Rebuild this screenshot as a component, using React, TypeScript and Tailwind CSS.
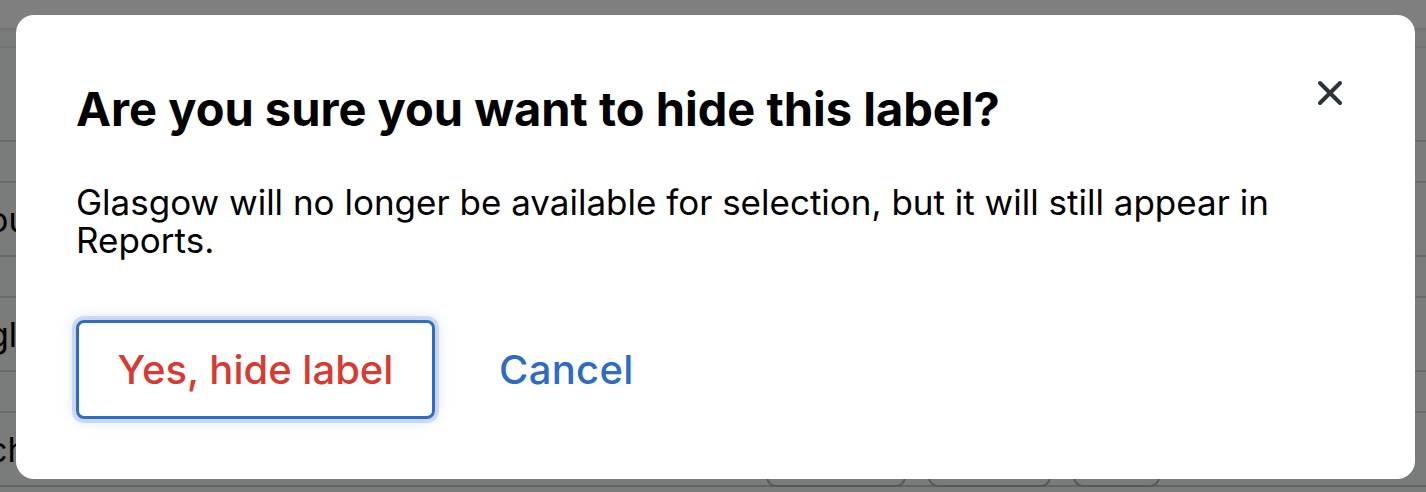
import React from "react";

const FONT = { fontFamily: "Inter, 'Noto Sans', sans-serif" };

const rows = [
  { text: "ou" },
  { text: "gl" },
  { text: "ch" },
];

const App: React.FC = () => {
  return (
    <div className="relative w-[1426px] h-[492px] overflow-hidden bg-[#f4f6f6]" style={FONT}>
      {/* underlying page */}
      <div className="h-[30px] bg-white border-b-2 border-[#dcdfe0]" />
      <div className="h-[18px] border-b-2 border-[#e3e6e7]" />
      <div className="mt-[92px]">
        {rows.map((r) => (
          <div key={r.text}>
            <div className="h-[41px] border-t-2 border-[#d6d9da]" />
            <div className="h-[74px] border-t-2 border-[#d6d9da] flex items-center">
              <span className="ml-[-12px] text-[34px] text-black">{r.text}</span>
            </div>
          </div>
        ))}
        <div className="border-t-2 border-[#c4c8c9] h-[8px] flex justify-end pr-[266px] gap-[22px]">
          <div className="-mt-[40px] w-[140px] h-[40px] rounded-b-[10px] border-2 border-[#aab0b0]" />
          <div className="-mt-[40px] w-[123px] h-[40px] rounded-b-[10px] border-2 border-[#aab0b0]" />
          <div className="-mt-[40px] w-[87px] h-[40px] rounded-b-[10px] border-2 border-[#aab0b0]" />
        </div>
      </div>

      {/* overlay */}
      <div className="absolute inset-0 bg-black/50" />

      {/* modal */}
      <div className="absolute left-[16px] top-[15px] w-[1399px] h-[464px] bg-white rounded-[18px] pl-[60px] pr-[110px] pt-[66px]">
        <button className="absolute right-[57px] top-[50px] w-[56px] h-[56px] flex items-center justify-center text-[#2b3438]">
          <svg width="26" height="26" viewBox="0 0 26 26" fill="none" stroke="currentColor" strokeWidth="4" strokeLinecap="round">
            <path d="M3 3 L23 23 M23 3 L3 23" />
          </svg>
        </button>
        <h2 className="text-[47px] leading-[56px] font-bold text-black">
          Are you sure you want to hide this label?
        </h2>
        <p className="mt-[46px] text-[35px] leading-[38px] text-black">
          Glasgow will no longer be available for selection, but it will still appear in Reports.
        </p>
        <div className="mt-[61px] flex items-center gap-[64px]">
          <button className="w-[359px] h-[99px] rounded-[8px] border-[3px] border-[#2f6cc3] shadow-[0_0_0_4px_rgba(47,108,195,0.18),0_0_12px_4px_rgba(47,108,195,0.15)] text-[40px] font-medium text-[#d63a33]">
            Yes, hide label
          </button>
          <button className="text-[40px] font-medium text-[#2e6bc4] tracking-[0.3px]">Cancel</button>
        </div>
      </div>
    </div>
  );
};

export default App;
